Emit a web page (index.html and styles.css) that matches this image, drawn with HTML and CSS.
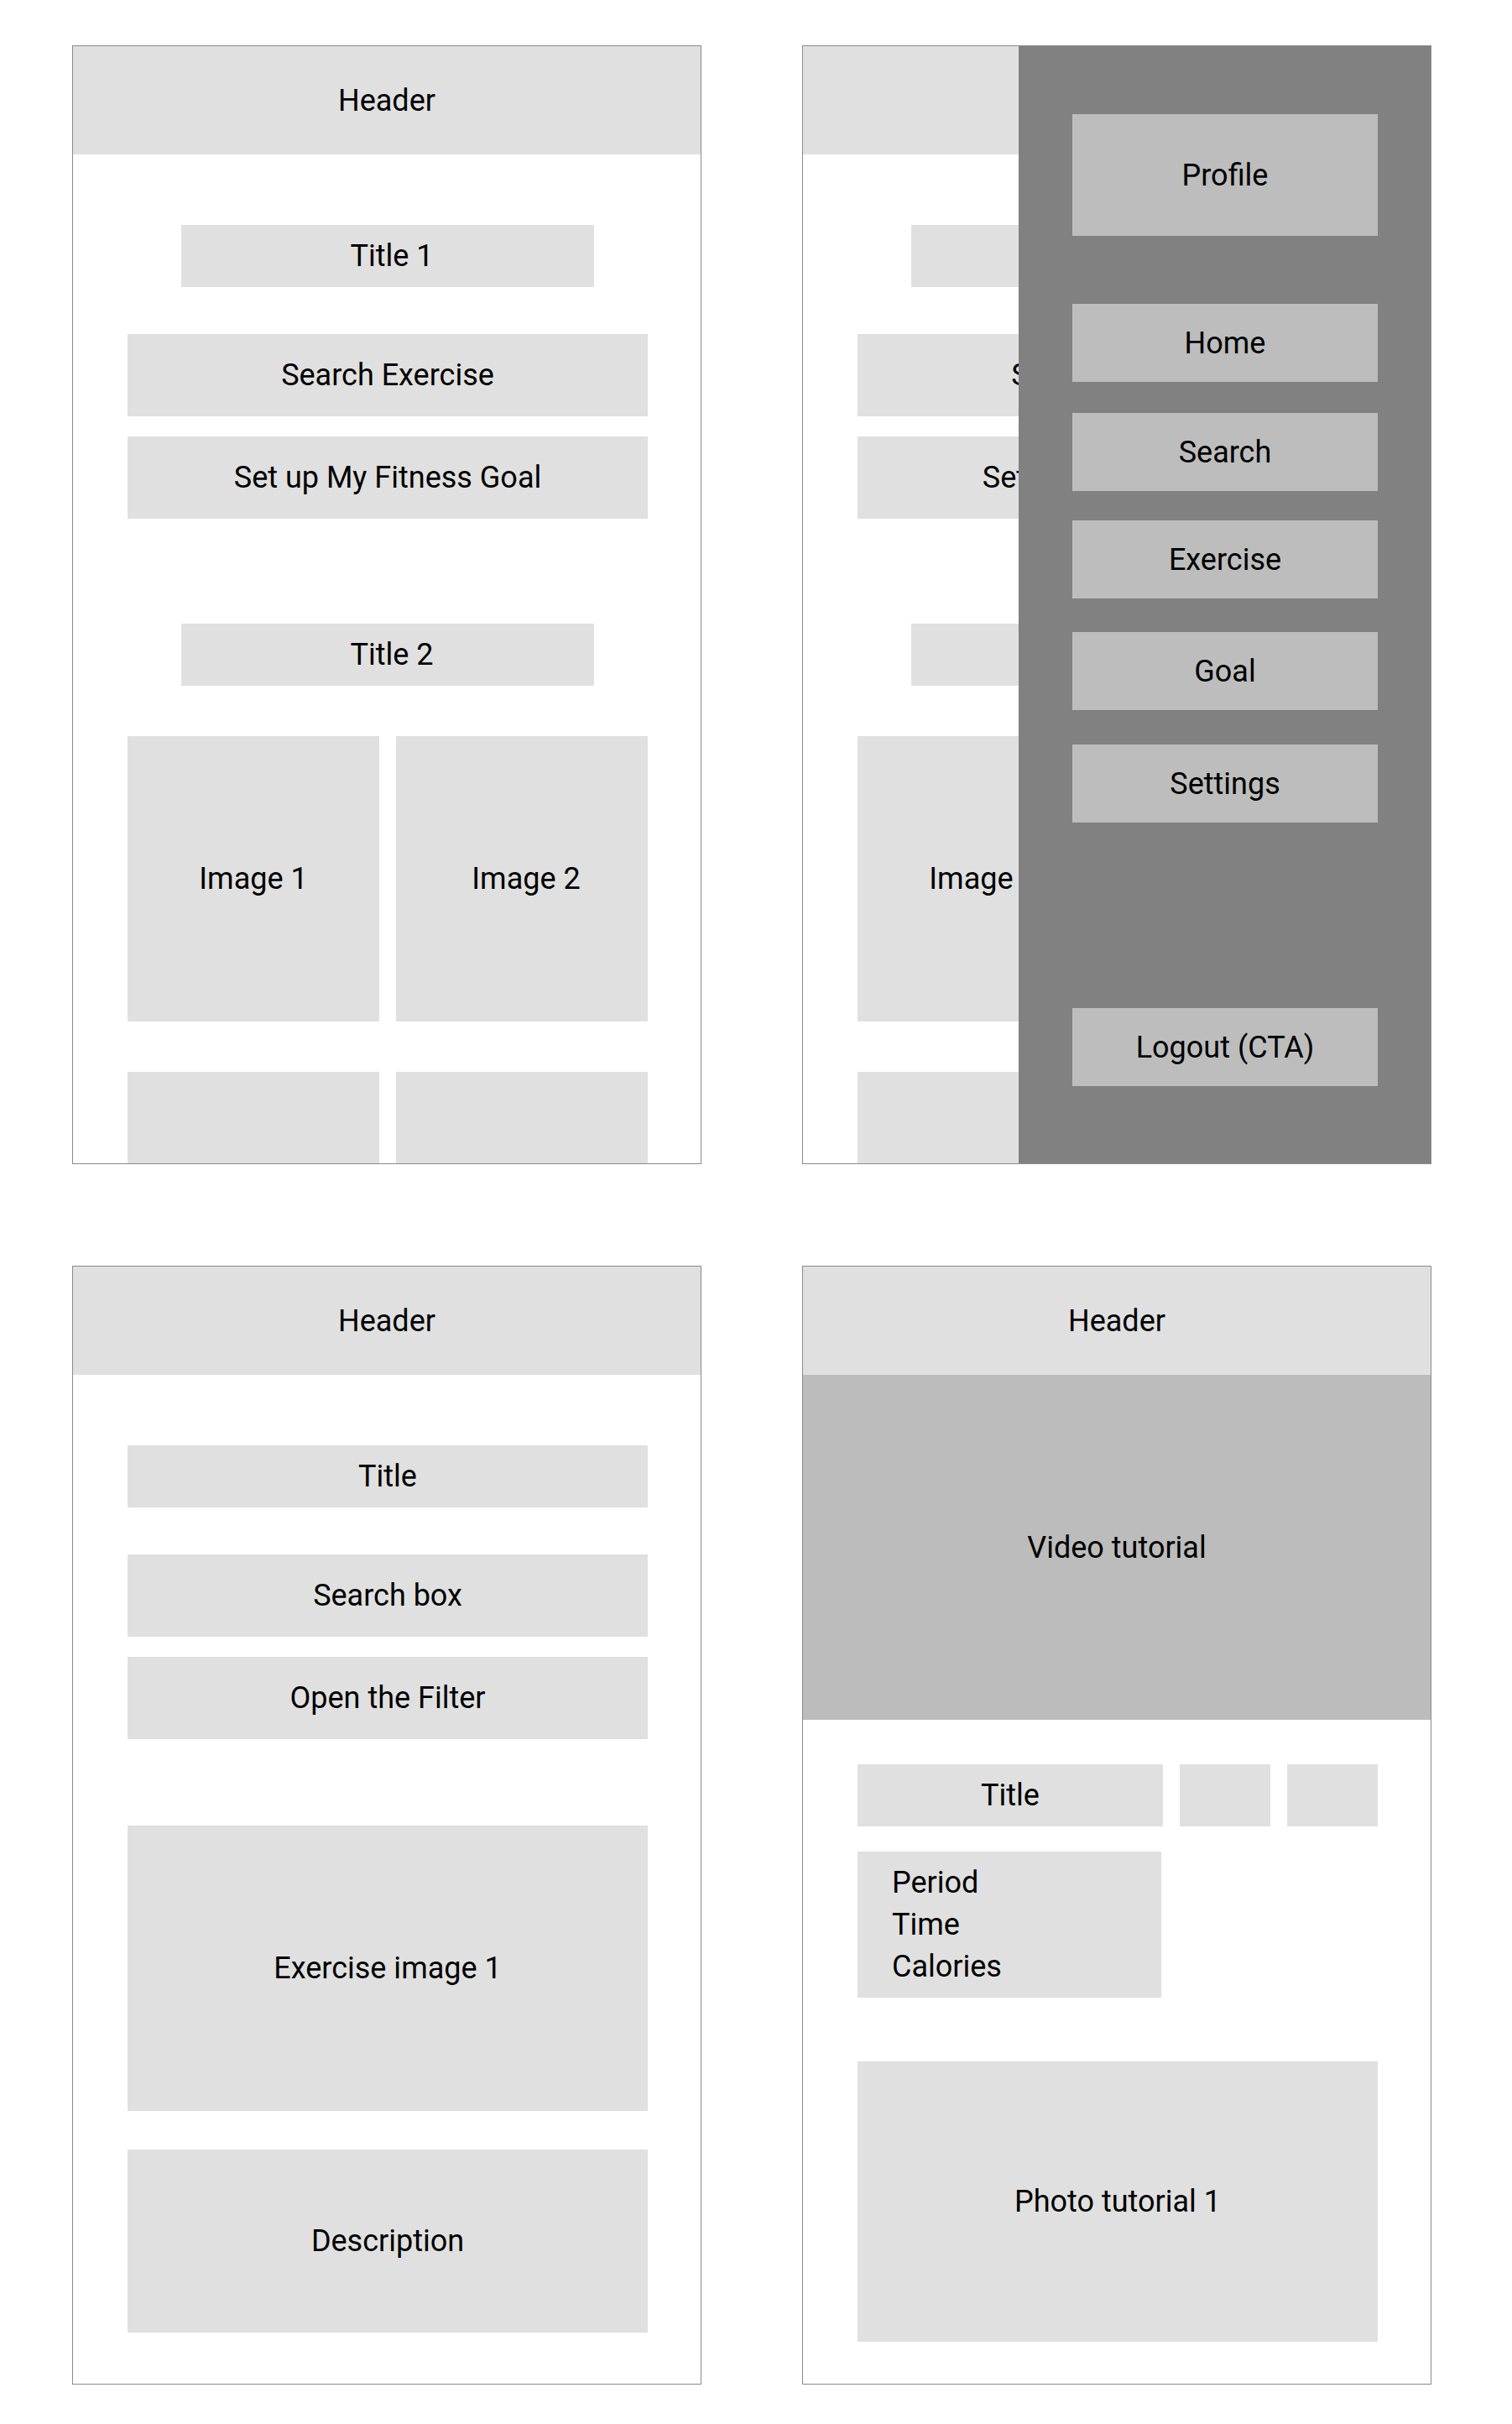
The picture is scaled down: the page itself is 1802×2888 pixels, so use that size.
FILE: index.html
```html
<!DOCTYPE html>
<html lang="en">
<head>
    <meta charset="UTF-8">
    <meta name="viewport" content="width=device-width, initial-scale=1.0">
    <title>Fitness App Wireframes</title>
    <link rel="stylesheet" href="styles.css">
</head>
<body>
    <div class="board">
        <!-- Home screen -->
        <div class="phone">
            <header class="phone-header">Header</header>
            <div class="content">
                <div class="box title-short">Title 1</div>
                <div class="box btn search-btn">Search Exercise</div>
                <div class="box btn goal-btn">Set up My Fitness Goal</div>
                <div class="box title-short title-second">Title 2</div>
                <div class="image-grid">
                    <div class="box">Image 1</div>
                    <div class="box image-right">Image 2</div>
                    <div class="box"></div>
                    <div class="box"></div>
                </div>
            </div>
        </div>

        <!-- Home screen with side menu open -->
        <div class="phone">
            <header class="phone-header">Header</header>
            <div class="content">
                <div class="box title-short">Title 1</div>
                <div class="box btn search-btn">Search Exercise</div>
                <div class="box btn goal-btn goal-shifted">Set up My Fitness Goal</div>
                <div class="box title-short title-second">Title 2</div>
                <div class="image-grid">
                    <div class="box">Image 1</div>
                    <div class="box image-right">Image 2</div>
                    <div class="box"></div>
                    <div class="box"></div>
                </div>
            </div>
            <aside class="drawer">
                <div class="menu-item profile">Profile</div>
                <div class="menu-item">Home</div>
                <div class="menu-item">Search</div>
                <div class="menu-item">Exercise</div>
                <div class="menu-item">Goal</div>
                <div class="menu-item">Settings</div>
                <div class="menu-item logout">Logout (CTA)</div>
            </aside>
        </div>

        <!-- Search screen -->
        <div class="phone">
            <header class="phone-header">Header</header>
            <div class="content">
                <div class="box title-full">Title</div>
                <div class="box btn search-btn">Search box</div>
                <div class="box btn goal-btn">Open the Filter</div>
                <div class="box exercise-img">Exercise image 1</div>
                <div class="box description">Description</div>
            </div>
        </div>

        <!-- Exercise detail screen -->
        <div class="phone">
            <header class="phone-header">Header</header>
            <div class="video">Video tutorial</div>
            <div class="content detail">
                <div class="title-row">
                    <div class="box title-main">Title</div>
                    <div class="box icon-box"></div>
                    <div class="box icon-box"></div>
                </div>
                <div class="box stats">
                    <span>Period</span>
                    <span>Time</span>
                    <span>Calories</span>
                </div>
                <div class="box photo">Photo tutorial 1</div>
            </div>
        </div>
    </div>
</body>
</html>
```

FILE: styles.css
```css
* {
    box-sizing: border-box;
    margin: 0;
    padding: 0;
}

body {
    font-family: Roboto, 'Liberation Sans', sans-serif;
    font-size: 36px;
    color: #000;
    background: #fff;
}

.board {
    display: grid;
    grid-template-columns: 750px 750px;
    column-gap: 120px;
    row-gap: 121px;
    padding: 54px 0 0 86px;
}

.phone {
    position: relative;
    height: 1333px;
    border: 1px solid #8a8a8a;
    background: #fff;
    overflow: hidden;
    display: flex;
    flex-direction: column;
}

.phone-header {
    height: 129px;
    flex-shrink: 0;
    background: #e0e0e0;
    display: flex;
    align-items: center;
    justify-content: center;
}

.content {
    display: flex;
    flex-direction: column;
    padding: 84px 63px 0 65px;
}

.box {
    background: #e0e0e0;
    display: flex;
    align-items: center;
    justify-content: center;
    flex-shrink: 0;
}

.title-short {
    width: 492px;
    height: 74px;
    align-self: center;
    padding-left: 10px;
}

.title-second {
    margin-top: 125px;
}

.title-full {
    height: 74px;
}

.btn {
    height: 98px;
}

.search-btn {
    margin-top: 56px;
}

.goal-btn {
    margin-top: 24px;
}

.goal-shifted {
    padding-left: 44px;
}

.image-grid {
    display: grid;
    grid-template-columns: 300px 300px;
    grid-auto-rows: 340px;
    column-gap: 20px;
    row-gap: 60px;
    margin-top: 60px;
}

.image-right {
    padding-left: 10px;
}

/* side menu */
.drawer {
    position: absolute;
    top: 0;
    bottom: 0;
    left: 257px;
    right: 0;
    background: #818181;
    display: flex;
    flex-direction: column;
    padding: 81px 63px 92px 64px;
}

.menu-item {
    height: 93px;
    background: #bdbdbd;
    display: flex;
    align-items: center;
    justify-content: center;
}

.menu-item.profile {
    height: 145px;
}

.menu-item:nth-child(2) { margin-top: 81px; }
.menu-item:nth-child(3) { margin-top: 37px; }
.menu-item:nth-child(4) { margin-top: 35px; }
.menu-item:nth-child(5) { margin-top: 40px; }
.menu-item:nth-child(6) { margin-top: 41px; }

.menu-item.logout {
    margin-top: auto;
}

/* search screen */
.exercise-img {
    height: 340px;
    margin-top: 103px;
}

.description {
    height: 218px;
    margin-top: 46px;
}

/* detail screen */
.video {
    height: 411px;
    flex-shrink: 0;
    background: #bcbcbc;
    display: flex;
    align-items: center;
    justify-content: center;
}

.detail {
    padding-top: 53px;
}

.title-row {
    display: flex;
    gap: 20px;
}

.title-main {
    width: 364px;
    height: 74px;
}

.icon-box {
    width: 108px;
    height: 74px;
}

.stats {
    width: 362px;
    height: 174px;
    margin-top: 30px;
    padding-left: 41px;
    flex-direction: column;
    align-items: flex-start;
    line-height: 50px;
}

.photo {
    height: 334px;
    margin-top: 76px;
}
```
